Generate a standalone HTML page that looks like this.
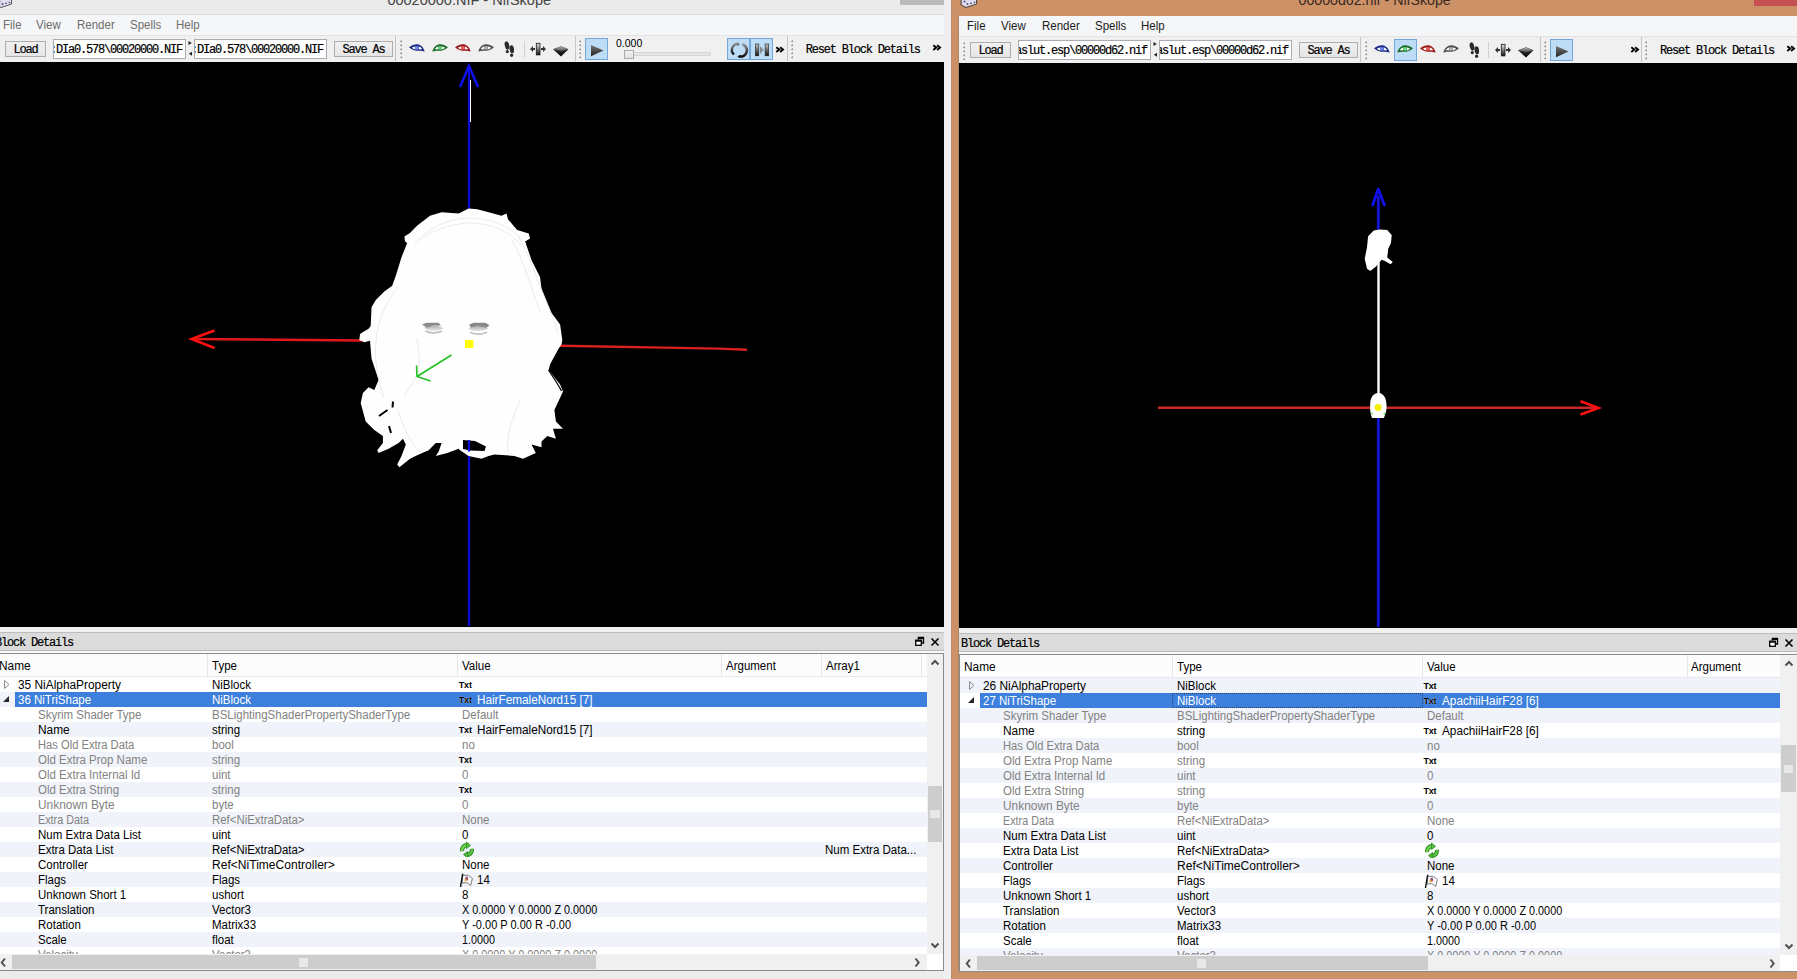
<!DOCTYPE html><html><head><meta charset="utf-8"><style>html,body{margin:0;padding:0;}body{width:1797px;height:979px;overflow:hidden;position:relative;background:#f0f0f0;}.a{position:absolute;}.t{white-space:nowrap;}svg{overflow:visible;}</style></head><body>
<div class="a" style="left:0px;top:0px;width:951px;height:15px;background:#ebebeb;"></div>
<div class="a" style="left:0px;top:14px;width:944px;height:1px;background:#dadada;"></div>
<div class="a t" style="left:387.4px;top:-7.28px;font-size:14.5px;line-height:1;font-family:'Liberation Sans', sans-serif;color:#444;font-weight:normal;">00020000.NIF - NifSkope</div>
<div class="a" style="left:900px;top:0px;width:45px;height:4.5px;background:#bbbbbb;"></div>
<svg class="a" style="left:-5px;top:-6px;" width="18" height="15" viewBox="0 0 18 15"><path d="M1 0 L16.5 0 L16.6 10 L6 13.5 L1.2 11Z" fill="#dedcf0" stroke="#555" stroke-width="1"/><ellipse cx="4.5" cy="7.5" rx="1" ry="0.9" fill="#505060"/><ellipse cx="7.5" cy="10" rx="1" ry="1" fill="#505060"/><ellipse cx="11" cy="9.3" rx="1" ry="0.8" fill="#505060"/><ellipse cx="14.5" cy="8.5" rx="0.9" ry="0.8" fill="#505060"/></svg>
<div class="a" style="left:0px;top:15px;width:944px;height:21px;background:#f5f6f7;"></div>
<div class="a" style="left:0px;top:35px;width:944px;height:1px;background:#e3e3e3;"></div>
<div class="a t" style="left:2.7px;top:18.84px;font-size:12px;line-height:1;font-family:'Liberation Sans', sans-serif;color:#6d6d6d;font-weight:normal;transform:scaleX(0.9583);transform-origin:0 0;">File</div>
<div class="a t" style="left:36px;top:18.84px;font-size:12px;line-height:1;font-family:'Liberation Sans', sans-serif;color:#6d6d6d;font-weight:normal;transform:scaleX(0.9583);transform-origin:0 0;">View</div>
<div class="a t" style="left:77px;top:18.84px;font-size:12px;line-height:1;font-family:'Liberation Sans', sans-serif;color:#6d6d6d;font-weight:normal;transform:scaleX(0.9583);transform-origin:0 0;">Render</div>
<div class="a t" style="left:130px;top:18.84px;font-size:12px;line-height:1;font-family:'Liberation Sans', sans-serif;color:#6d6d6d;font-weight:normal;transform:scaleX(0.9583);transform-origin:0 0;">Spells</div>
<div class="a t" style="left:176px;top:18.84px;font-size:12px;line-height:1;font-family:'Liberation Sans', sans-serif;color:#6d6d6d;font-weight:normal;transform:scaleX(0.9583);transform-origin:0 0;">Help</div>
<div class="a" style="left:0px;top:36px;width:944px;height:26px;background:#f0f0f0;"></div>
<div class="a" style="left:5px;top:41px;width:41px;height:16px;background:linear-gradient(#f0f0f0,#e5e5e5);border:1px solid #adadad;box-sizing:border-box;"></div>
<div class="a t" style="left:13.5px;top:43.81px;font-size:12px;line-height:1;font-family:'Liberation Mono', monospace;color:#000;font-weight:normal;letter-spacing:-1.2px;white-space:pre;-webkit-text-stroke:0.2px #000;">Load</div>
<div class="a" style="left:53px;top:39px;width:133px;height:20px;background:#fff;border:1px solid #abadb3;box-sizing:border-box;overflow:hidden;"><div class="a t" style="left:-4px;top:4.11px;font-size:12px;line-height:1;font-family:'Liberation Mono', monospace;letter-spacing:-1.2px;white-space:pre;color:#000;-webkit-text-stroke:0.2px #000">:DIa0.578\00020000.NIF</div></div>
<svg class="a" style="left:188px;top:41px;" width="5" height="15" viewBox="0 0 5 15"><path d="M0.5 0 L3.8 2 L0.5 4Z" fill="#222"/><path d="M4 10.8 L0.8 12.8 L4 14.8Z" fill="#222"/></svg>
<div class="a" style="left:194px;top:39px;width:133px;height:20px;background:#fff;border:1px solid #abadb3;box-sizing:border-box;overflow:hidden;"><div class="a t" style="left:-4px;top:4.11px;font-size:12px;line-height:1;font-family:'Liberation Mono', monospace;letter-spacing:-1.2px;white-space:pre;color:#000;-webkit-text-stroke:0.2px #000">:DIa0.578\00020000.NIF</div></div>
<div class="a" style="left:334px;top:41px;width:59px;height:16px;background:linear-gradient(#f0f0f0,#e5e5e5);border:1px solid #adadad;box-sizing:border-box;"></div>
<div class="a t" style="left:342.5px;top:43.81px;font-size:12px;line-height:1;font-family:'Liberation Mono', monospace;color:#000;font-weight:normal;letter-spacing:-1.2px;white-space:pre;-webkit-text-stroke:0.2px #000;">Save&nbsp;As</div>
<div class="a" style="left:395px;top:36px;width:1px;height:25px;background:#c5c5c5;"></div>
<svg class="a" style="left:400px;top:40px;" width="3" height="20" viewBox="0 0 3 20"><rect x="1" y="0" width="1" height="1" fill="#b0b0b0"/><rect x="0" y="1" width="2" height="1" fill="#9a9a9a"/><rect x="1" y="2" width="1.5" height="1" fill="#e0e0e0"/><rect x="1" y="4" width="1" height="1" fill="#b0b0b0"/><rect x="0" y="5" width="2" height="1" fill="#9a9a9a"/><rect x="1" y="6" width="1.5" height="1" fill="#e0e0e0"/><rect x="1" y="8" width="1" height="1" fill="#b0b0b0"/><rect x="0" y="9" width="2" height="1" fill="#9a9a9a"/><rect x="1" y="10" width="1.5" height="1" fill="#e0e0e0"/><rect x="1" y="12" width="1" height="1" fill="#b0b0b0"/><rect x="0" y="13" width="2" height="1" fill="#9a9a9a"/><rect x="1" y="14" width="1.5" height="1" fill="#e0e0e0"/><rect x="1" y="16" width="1" height="1" fill="#b0b0b0"/><rect x="0" y="17" width="2" height="1" fill="#9a9a9a"/><rect x="1" y="18" width="1.5" height="1" fill="#e0e0e0"/></svg>
<svg class="a" style="left:409px;top:44.3px;" width="16" height="9" viewBox="0 0 16 9"><path d="M0 3.3 C3 0.8 6 0 8.5 0.2 C12 0.5 14.5 3.5 15.8 7.6 C13 6.6 11 6.6 8 6.7 C5 6.7 2.5 5.4 0 3.3Z" fill="#1c2a88"/><path d="M2.8 3.7 C4.5 2.9 5.6 2.6 6.4 2.5 L6.3 5.4 C4.8 5.2 3.8 4.6 2.8 3.7Z" fill="#fff"/><path d="M9.8 2.6 C11.2 2.9 12.5 4 13.2 5.5 C12 5.3 11 5.3 9.9 5.4Z" fill="#fff"/><path d="M6.7 2.2 L9.5 2.2 L9.7 5.5 L6.5 5.5Z" fill="#6f8ef0"/></svg>
<svg class="a" style="left:432px;top:44.3px;" width="16" height="9" viewBox="0 0 16 9"><g transform="translate(16,0) scale(-1,1)"><path d="M0 3.3 C3 0.8 6 0 8.5 0.2 C12 0.5 14.5 3.5 15.8 7.6 C13 6.6 11 6.6 8 6.7 C5 6.7 2.5 5.4 0 3.3Z" fill="#1a6a2a"/><path d="M2.8 3.7 C4.5 2.9 5.6 2.6 6.4 2.5 L6.3 5.4 C4.8 5.2 3.8 4.6 2.8 3.7Z" fill="#fff"/><path d="M9.8 2.6 C11.2 2.9 12.5 4 13.2 5.5 C12 5.3 11 5.3 9.9 5.4Z" fill="#fff"/><path d="M6.7 2.2 L9.5 2.2 L9.7 5.5 L6.5 5.5Z" fill="#6ee08a"/></g></svg>
<svg class="a" style="left:455px;top:44.3px;" width="16" height="9" viewBox="0 0 16 9"><path d="M0 3.3 C3 0.8 6 0 8.5 0.2 C12 0.5 14.5 3.5 15.8 7.6 C13 6.6 11 6.6 8 6.7 C5 6.7 2.5 5.4 0 3.3Z" fill="#9a1818"/><path d="M2.8 3.7 C4.5 2.9 5.6 2.6 6.4 2.5 L6.3 5.4 C4.8 5.2 3.8 4.6 2.8 3.7Z" fill="#fff"/><path d="M9.8 2.6 C11.2 2.9 12.5 4 13.2 5.5 C12 5.3 11 5.3 9.9 5.4Z" fill="#fff"/><path d="M6.7 2.2 L9.5 2.2 L9.7 5.5 L6.5 5.5Z" fill="#f06060"/></svg>
<svg class="a" style="left:478px;top:44.3px;" width="16" height="9" viewBox="0 0 16 9"><g transform="translate(16,0) scale(-1,1)"><path d="M0 3.3 C3 0.8 6 0 8.5 0.2 C12 0.5 14.5 3.5 15.8 7.6 C13 6.6 11 6.6 8 6.7 C5 6.7 2.5 5.4 0 3.3Z" fill="#505050"/><path d="M2.8 3.7 C4.5 2.9 5.6 2.6 6.4 2.5 L6.3 5.4 C4.8 5.2 3.8 4.6 2.8 3.7Z" fill="#fff"/><path d="M9.8 2.6 C11.2 2.9 12.5 4 13.2 5.5 C12 5.3 11 5.3 9.9 5.4Z" fill="#fff"/><path d="M6.7 2.2 L9.5 2.2 L9.7 5.5 L6.5 5.5Z" fill="#b8b8b8"/></g></svg>
<svg class="a" style="left:503.7px;top:41px;" width="11" height="16" viewBox="0 0 11 16"><ellipse cx="3" cy="4.5" rx="2.2" ry="4.2" fill="#2a2a2a" transform="rotate(-14 3 4.5)"/><ellipse cx="3.3" cy="10.6" rx="1.6" ry="1.7" fill="#2a2a2a"/><ellipse cx="7.8" cy="8.2" rx="2.2" ry="4" fill="#2a2a2a" transform="rotate(-8 7.8 8.2)"/><ellipse cx="7.6" cy="14.2" rx="1.6" ry="1.7" fill="#2a2a2a"/></svg>
<div class="a" style="left:524px;top:41px;width:1px;height:16px;background:#d0d0d0;"></div>
<svg class="a" style="left:530px;top:43px;" width="16" height="12" viewBox="0 0 16 12"><defs><linearGradient id="mg" x1="0" y1="0" x2="0" y2="1"><stop offset="0" stop-color="#e8e8e8"/><stop offset="1" stop-color="#101010"/></linearGradient></defs><rect x="6.3" y="0.3" width="3.7" height="11.6" fill="url(#mg)" stroke="#1a1a1a" stroke-width="0.8"/><path d="M0 6 L3 3 L3 5 L5 5 L5 7 L3 7 L3 9Z" fill="#333"/><path d="M16 6 L13 3 L13 5 L11 5 L11 7 L13 7 L13 9Z" fill="#333"/></svg>
<svg class="a" style="left:553.4px;top:45.6px;" width="16" height="11" viewBox="0 0 16 11"><defs><linearGradient id="tg" x1="0" y1="0" x2="0" y2="1"><stop offset="0" stop-color="#b0b0b0"/><stop offset="1" stop-color="#4a4a4a"/></linearGradient><linearGradient id="tg2" x1="0" y1="0" x2="0" y2="1"><stop offset="0" stop-color="#3a3a3a"/><stop offset="1" stop-color="#050505"/></linearGradient></defs><path d="M0 3.2 L8 0.3 L15.5 3.2 L8 10.6Z" fill="url(#tg2)"/><path d="M0.5 3.2 L8 0.6 L15 3.2 L8 5.2Z" fill="url(#tg)"/></svg>
<div class="a" style="left:574.5px;top:36px;width:1px;height:25px;background:#c5c5c5;"></div>
<svg class="a" style="left:579px;top:40px;" width="3" height="20" viewBox="0 0 3 20"><rect x="1" y="0" width="1" height="1" fill="#b0b0b0"/><rect x="0" y="1" width="2" height="1" fill="#9a9a9a"/><rect x="1" y="2" width="1.5" height="1" fill="#e0e0e0"/><rect x="1" y="4" width="1" height="1" fill="#b0b0b0"/><rect x="0" y="5" width="2" height="1" fill="#9a9a9a"/><rect x="1" y="6" width="1.5" height="1" fill="#e0e0e0"/><rect x="1" y="8" width="1" height="1" fill="#b0b0b0"/><rect x="0" y="9" width="2" height="1" fill="#9a9a9a"/><rect x="1" y="10" width="1.5" height="1" fill="#e0e0e0"/><rect x="1" y="12" width="1" height="1" fill="#b0b0b0"/><rect x="0" y="13" width="2" height="1" fill="#9a9a9a"/><rect x="1" y="14" width="1.5" height="1" fill="#e0e0e0"/><rect x="1" y="16" width="1" height="1" fill="#b0b0b0"/><rect x="0" y="17" width="2" height="1" fill="#9a9a9a"/><rect x="1" y="18" width="1.5" height="1" fill="#e0e0e0"/></svg>
<div class="a" style="left:585px;top:38px;width:23px;height:22px;background:#bddcf6;border:1px solid #74a8dc;box-sizing:border-box;"></div>
<svg class="a" style="left:590.6px;top:44.6px;" width="13" height="12" viewBox="0 0 13 12"><defs><linearGradient id="pg" x1="0" y1="0" x2="0" y2="1"><stop offset="0" stop-color="#777"/><stop offset="1" stop-color="#222"/></linearGradient></defs><path d="M0 0 L12.5 5.6 L0 11.3Z" fill="url(#pg)"/></svg>
<div class="a t" style="left:616px;top:38.21px;font-size:10.5px;line-height:1;font-family:'Liberation Sans', sans-serif;color:#000;font-weight:normal;">0.000</div>
<div class="a" style="left:624px;top:52px;width:87px;height:4px;background:#e6e6e6;border:1px solid #d6d6d6;box-sizing:border-box;"></div>
<div class="a" style="left:624px;top:50px;width:10px;height:9px;background:linear-gradient(#f4f4f4,#e0e0e0);border:1px solid #acacac;box-sizing:border-box;"></div>
<div class="a" style="left:727px;top:38px;width:46px;height:22px;background:#bddcf6;border:1px solid #74a8dc;box-sizing:border-box;"></div>
<div class="a" style="left:749px;top:38px;width:1.5px;height:22px;background:#74a8dc;"></div>
<svg class="a" style="left:731px;top:42px;" width="16" height="16" viewBox="0 0 16 16"><defs><linearGradient id="lg" x1="0" y1="0" x2="0" y2="1"><stop offset="0" stop-color="#8a8a8a"/><stop offset="1" stop-color="#101010"/></linearGradient></defs><path d="M7.5 2 A6 6 0 0 0 3 12.5" stroke="url(#lg)" stroke-width="2.3" fill="none"/><path d="M11.5 2.5 A6 6 0 0 1 8 14.3" stroke="url(#lg)" stroke-width="2.6" fill="none"/><path d="M6 0.5 L9 2.2 L6.5 4.5Z" fill="#777"/><path d="M9.5 12.8 L6.3 14.5 L9 16Z" fill="#111"/></svg>
<svg class="a" style="left:755px;top:44px;" width="14" height="12" viewBox="0 0 14 12"><defs><linearGradient id="bg2" x1="0" y1="0" x2="0" y2="1"><stop offset="0" stop-color="#c8c8c8"/><stop offset="1" stop-color="#111"/></linearGradient></defs><rect x="0.3" y="0" width="3.5" height="11.8" fill="url(#bg2)" stroke="#222" stroke-width="0.6"/><rect x="10.1" y="0" width="3.6" height="11.8" fill="url(#bg2)" stroke="#222" stroke-width="0.6"/><path d="M5 2 L8.7 6 L5 10Z" fill="#8a8a8a"/></svg>
<svg class="a" style="left:776px;top:47px;" width="8" height="6" viewBox="0 0 8 6"><path d="M0.3 0.3 L3.2 2.6 L0.3 4.9 M4.1 0.3 L7 2.6 L4.1 4.9" stroke="#000" stroke-width="1.9" fill="none"/></svg>
<div class="a" style="left:786.5px;top:36px;width:1px;height:25px;background:#c5c5c5;"></div>
<svg class="a" style="left:791px;top:40px;" width="3" height="20" viewBox="0 0 3 20"><rect x="1" y="0" width="1" height="1" fill="#b0b0b0"/><rect x="0" y="1" width="2" height="1" fill="#9a9a9a"/><rect x="1" y="2" width="1.5" height="1" fill="#e0e0e0"/><rect x="1" y="4" width="1" height="1" fill="#b0b0b0"/><rect x="0" y="5" width="2" height="1" fill="#9a9a9a"/><rect x="1" y="6" width="1.5" height="1" fill="#e0e0e0"/><rect x="1" y="8" width="1" height="1" fill="#b0b0b0"/><rect x="0" y="9" width="2" height="1" fill="#9a9a9a"/><rect x="1" y="10" width="1.5" height="1" fill="#e0e0e0"/><rect x="1" y="12" width="1" height="1" fill="#b0b0b0"/><rect x="0" y="13" width="2" height="1" fill="#9a9a9a"/><rect x="1" y="14" width="1.5" height="1" fill="#e0e0e0"/><rect x="1" y="16" width="1" height="1" fill="#b0b0b0"/><rect x="0" y="17" width="2" height="1" fill="#9a9a9a"/><rect x="1" y="18" width="1.5" height="1" fill="#e0e0e0"/></svg>
<div class="a t" style="left:805.7px;top:43.61px;font-size:12px;line-height:1;font-family:'Liberation Mono', monospace;color:#000;font-weight:normal;letter-spacing:-1.2px;white-space:pre;-webkit-text-stroke:0.2px #000;">Reset&nbsp;Block&nbsp;Details</div>
<svg class="a" style="left:933px;top:45px;" width="8" height="6" viewBox="0 0 8 6"><path d="M0.3 0.3 L3.2 2.6 L0.3 4.9 M4.1 0.3 L7 2.6 L4.1 4.9" stroke="#000" stroke-width="1.9" fill="none"/></svg>
<div class="a" style="left:0px;top:62px;width:944px;height:565px;background:#000;"></div>
<div class="a" style="left:0px;top:627px;width:944px;height:5px;background:#f0f0f0;"></div>
<div class="a" style="left:0px;top:632px;width:944px;height:1px;background:#bdbdbd;"></div>
<div class="a" style="left:0px;top:633px;width:944px;height:17px;background:#dbdbdb;"></div>
<div class="a" style="left:0px;top:650px;width:944px;height:1px;background:#b9b9b9;"></div>
<div class="a" style="left:0px;top:651px;width:944px;height:2px;background:#f9f9f9;"></div>
<div class="a t" style="left:-5px;top:636.81px;font-size:12px;line-height:1;font-family:'Liberation Mono', monospace;color:#000;font-weight:normal;letter-spacing:-1.2px;white-space:pre;-webkit-text-stroke:0.2px #000;">Block&nbsp;Details</div>
<svg class="a" style="left:915px;top:637px;" width="9" height="9" viewBox="0 0 9 9"><path d="M3 0.5 H8.5 V6 H7 M3.5 2.5 V0.5" fill="none" stroke="#000" stroke-width="1.3"/><rect x="0.7" y="3.2" width="5.6" height="5.1" fill="#fff" stroke="#000" stroke-width="1.3"/><rect x="0.7" y="3.2" width="5.6" height="1.5" fill="#000"/><rect x="2.7" y="0.4" width="6" height="1.6" fill="#000"/></svg>
<svg class="a" style="left:931px;top:638px;" width="8" height="8" viewBox="0 0 8 8"><path d="M0.5 0.5 L7.5 7.5 M7.5 0.5 L0.5 7.5" stroke="#000" stroke-width="1.6"/></svg>
<div class="a" style="left:-6px;top:653px;width:950px;height:318px;background:#fff;border:1px solid #8a8a8a;box-sizing:border-box;"></div>
<div class="a" style="left:-5px;top:654px;width:932px;height:22px;background:#fcfcfc;"></div>
<div class="a" style="left:-5px;top:676px;width:932px;height:1px;background:#e8e8e8;"></div>
<div class="a" style="left:207px;top:654px;width:1px;height:22px;background:#e5e5e5;"></div>
<div class="a" style="left:457px;top:654px;width:1px;height:22px;background:#e5e5e5;"></div>
<div class="a" style="left:721px;top:654px;width:1px;height:22px;background:#e5e5e5;"></div>
<div class="a" style="left:821px;top:654px;width:1px;height:22px;background:#e5e5e5;"></div>
<div class="a" style="left:921px;top:654px;width:1px;height:22px;background:#e5e5e5;"></div>
<div class="a t" style="left:-1.5px;top:659.84px;font-size:12px;line-height:1;font-family:'Liberation Sans', sans-serif;color:#000;font-weight:normal;transform:scaleX(0.9903);transform-origin:0 0;">Name</div>
<div class="a t" style="left:211.6px;top:659.84px;font-size:12px;line-height:1;font-family:'Liberation Sans', sans-serif;color:#000;font-weight:normal;transform:scaleX(0.9583);transform-origin:0 0;">Type</div>
<div class="a t" style="left:461.5px;top:659.84px;font-size:12px;line-height:1;font-family:'Liberation Sans', sans-serif;color:#000;font-weight:normal;transform:scaleX(0.9583);transform-origin:0 0;">Value</div>
<div class="a t" style="left:725.7px;top:659.84px;font-size:12px;line-height:1;font-family:'Liberation Sans', sans-serif;color:#000;font-weight:normal;transform:scaleX(0.9583);transform-origin:0 0;">Argument</div>
<div class="a t" style="left:825.6px;top:659.84px;font-size:12px;line-height:1;font-family:'Liberation Sans', sans-serif;color:#000;font-weight:normal;transform:scaleX(0.9583);transform-origin:0 0;">Array1</div>
<div class="a" style="left:-5px;top:677px;width:932px;height:277px;overflow:hidden">
<div class="a" style="left:0px;top:0px;width:932px;height:15px;background:#fff;"></div>
<div class="a t" style="left:23px;top:1.64px;font-size:12px;line-height:1;font-family:'Liberation Sans', sans-serif;color:#000;font-weight:normal;transform:scaleX(0.9898);transform-origin:0 0;">35 NiAlphaProperty</div>
<svg class="a" style="left:9px;top:3px;" width="6" height="10" viewBox="0 0 6 10"><path d="M0.5 0.5 L5 4.5 L0.5 8.5Z" fill="none" stroke="#8a8a8a" stroke-width="1"/></svg>
<div class="a t" style="left:216.7px;top:1.64px;font-size:12px;line-height:1;font-family:'Liberation Sans', sans-serif;color:#000;font-weight:normal;transform:scaleX(0.9583);transform-origin:0 0;">NiBlock</div>
<div class="a t" style="left:463.8px;top:3.68px;font-size:9px;line-height:1;font-family:'Liberation Sans', sans-serif;color:#000;font-weight:bold;letter-spacing:-0.2px;">Txt</div>
<div class="a" style="left:0px;top:15px;width:932px;height:15px;background:#f0f3f9;"></div>
<div class="a" style="left:20px;top:15px;width:912px;height:15px;background:#3c7fdc;"></div>
<div class="a t" style="left:23px;top:16.64px;font-size:12px;line-height:1;font-family:'Liberation Sans', sans-serif;color:#fff;font-weight:normal;transform:scaleX(0.9583);transform-origin:0 0;">36 NiTriShape</div>
<svg class="a" style="left:8px;top:19px;" width="7" height="7" viewBox="0 0 7 7"><path d="M6 0 L6 6 L0 6Z" fill="#262626"/></svg>
<div class="a t" style="left:216.7px;top:16.64px;font-size:12px;line-height:1;font-family:'Liberation Sans', sans-serif;color:#fff;font-weight:normal;transform:scaleX(0.9583);transform-origin:0 0;">NiBlock</div>
<div class="a t" style="left:463.8px;top:18.68px;font-size:9px;line-height:1;font-family:'Liberation Sans', sans-serif;color:#000;font-weight:bold;text-shadow:0 0 1px #fff;letter-spacing:-0.2px;">Txt</div>
<div class="a t" style="left:482.3px;top:16.64px;font-size:12px;line-height:1;font-family:'Liberation Sans', sans-serif;color:#fff;font-weight:normal;transform:scaleX(0.9784);transform-origin:0 0;">HairFemaleNord15 [7]</div>
<div class="a" style="left:0px;top:30px;width:932px;height:15px;background:#fff;"></div>
<div class="a t" style="left:43px;top:31.64px;font-size:12px;line-height:1;font-family:'Liberation Sans', sans-serif;color:#828282;font-weight:normal;transform:scaleX(0.9583);transform-origin:0 0;">Skyrim Shader Type</div>
<div class="a t" style="left:216.7px;top:31.64px;font-size:12px;line-height:1;font-family:'Liberation Sans', sans-serif;color:#828282;font-weight:normal;transform:scaleX(0.9583);transform-origin:0 0;">BSLightingShaderPropertyShaderType</div>
<div class="a t" style="left:466.8px;top:31.64px;font-size:12px;line-height:1;font-family:'Liberation Sans', sans-serif;color:#828282;font-weight:normal;transform:scaleX(0.9583);transform-origin:0 0;">Default</div>
<div class="a" style="left:0px;top:45px;width:932px;height:15px;background:#f0f3f9;"></div>
<div class="a t" style="left:43px;top:46.64px;font-size:12px;line-height:1;font-family:'Liberation Sans', sans-serif;color:#000;font-weight:normal;transform:scaleX(0.9903);transform-origin:0 0;">Name</div>
<div class="a t" style="left:216.7px;top:46.64px;font-size:12px;line-height:1;font-family:'Liberation Sans', sans-serif;color:#000;font-weight:normal;transform:scaleX(0.9583);transform-origin:0 0;">string</div>
<div class="a t" style="left:463.8px;top:48.68px;font-size:9px;line-height:1;font-family:'Liberation Sans', sans-serif;color:#000;font-weight:bold;letter-spacing:-0.2px;">Txt</div>
<div class="a t" style="left:482.3px;top:46.64px;font-size:12px;line-height:1;font-family:'Liberation Sans', sans-serif;color:#000;font-weight:normal;transform:scaleX(0.9784);transform-origin:0 0;">HairFemaleNord15 [7]</div>
<div class="a" style="left:0px;top:60px;width:932px;height:15px;background:#fff;"></div>
<div class="a t" style="left:43px;top:61.64px;font-size:12px;line-height:1;font-family:'Liberation Sans', sans-serif;color:#828282;font-weight:normal;transform:scaleX(0.9306);transform-origin:0 0;">Has Old Extra Data</div>
<div class="a t" style="left:216.7px;top:61.64px;font-size:12px;line-height:1;font-family:'Liberation Sans', sans-serif;color:#828282;font-weight:normal;transform:scaleX(0.9583);transform-origin:0 0;">bool</div>
<div class="a t" style="left:466.8px;top:61.64px;font-size:12px;line-height:1;font-family:'Liberation Sans', sans-serif;color:#828282;font-weight:normal;transform:scaleX(0.9583);transform-origin:0 0;">no</div>
<div class="a" style="left:0px;top:75px;width:932px;height:15px;background:#f0f3f9;"></div>
<div class="a t" style="left:43px;top:76.64px;font-size:12px;line-height:1;font-family:'Liberation Sans', sans-serif;color:#828282;font-weight:normal;transform:scaleX(0.9583);transform-origin:0 0;">Old Extra Prop Name</div>
<div class="a t" style="left:216.7px;top:76.64px;font-size:12px;line-height:1;font-family:'Liberation Sans', sans-serif;color:#828282;font-weight:normal;transform:scaleX(0.9583);transform-origin:0 0;">string</div>
<div class="a t" style="left:463.8px;top:78.68px;font-size:9px;line-height:1;font-family:'Liberation Sans', sans-serif;color:#000;font-weight:bold;letter-spacing:-0.2px;">Txt</div>
<div class="a" style="left:0px;top:90px;width:932px;height:15px;background:#fff;"></div>
<div class="a t" style="left:43px;top:91.64px;font-size:12px;line-height:1;font-family:'Liberation Sans', sans-serif;color:#828282;font-weight:normal;transform:scaleX(0.9583);transform-origin:0 0;">Old Extra Internal Id</div>
<div class="a t" style="left:216.7px;top:91.64px;font-size:12px;line-height:1;font-family:'Liberation Sans', sans-serif;color:#828282;font-weight:normal;transform:scaleX(0.9583);transform-origin:0 0;">uint</div>
<div class="a t" style="left:466.8px;top:91.64px;font-size:12px;line-height:1;font-family:'Liberation Sans', sans-serif;color:#828282;font-weight:normal;transform:scaleX(0.9583);transform-origin:0 0;">0</div>
<div class="a" style="left:0px;top:105px;width:932px;height:15px;background:#f0f3f9;"></div>
<div class="a t" style="left:43px;top:106.64px;font-size:12px;line-height:1;font-family:'Liberation Sans', sans-serif;color:#828282;font-weight:normal;transform:scaleX(0.9583);transform-origin:0 0;">Old Extra String</div>
<div class="a t" style="left:216.7px;top:106.64px;font-size:12px;line-height:1;font-family:'Liberation Sans', sans-serif;color:#828282;font-weight:normal;transform:scaleX(0.9583);transform-origin:0 0;">string</div>
<div class="a t" style="left:463.8px;top:108.68px;font-size:9px;line-height:1;font-family:'Liberation Sans', sans-serif;color:#000;font-weight:bold;letter-spacing:-0.2px;">Txt</div>
<div class="a" style="left:0px;top:120px;width:932px;height:15px;background:#fff;"></div>
<div class="a t" style="left:43px;top:121.64px;font-size:12px;line-height:1;font-family:'Liberation Sans', sans-serif;color:#828282;font-weight:normal;transform:scaleX(0.9913);transform-origin:0 0;">Unknown Byte</div>
<div class="a t" style="left:216.7px;top:121.64px;font-size:12px;line-height:1;font-family:'Liberation Sans', sans-serif;color:#828282;font-weight:normal;transform:scaleX(0.9583);transform-origin:0 0;">byte</div>
<div class="a t" style="left:466.8px;top:121.64px;font-size:12px;line-height:1;font-family:'Liberation Sans', sans-serif;color:#828282;font-weight:normal;transform:scaleX(0.9583);transform-origin:0 0;">0</div>
<div class="a" style="left:0px;top:135px;width:932px;height:15px;background:#f0f3f9;"></div>
<div class="a t" style="left:43px;top:136.64px;font-size:12px;line-height:1;font-family:'Liberation Sans', sans-serif;color:#828282;font-weight:normal;transform:scaleX(0.8996);transform-origin:0 0;">Extra Data</div>
<div class="a t" style="left:216.7px;top:136.64px;font-size:12px;line-height:1;font-family:'Liberation Sans', sans-serif;color:#828282;font-weight:normal;transform:scaleX(0.9499);transform-origin:0 0;">Ref&lt;NiExtraData&gt;</div>
<div class="a t" style="left:466.8px;top:136.64px;font-size:12px;line-height:1;font-family:'Liberation Sans', sans-serif;color:#828282;font-weight:normal;transform:scaleX(0.9583);transform-origin:0 0;">None</div>
<div class="a" style="left:0px;top:150px;width:932px;height:15px;background:#fff;"></div>
<div class="a t" style="left:43px;top:151.64px;font-size:12px;line-height:1;font-family:'Liberation Sans', sans-serif;color:#000;font-weight:normal;transform:scaleX(0.9583);transform-origin:0 0;">Num Extra Data List</div>
<div class="a t" style="left:216.7px;top:151.64px;font-size:12px;line-height:1;font-family:'Liberation Sans', sans-serif;color:#000;font-weight:normal;transform:scaleX(0.9583);transform-origin:0 0;">uint</div>
<div class="a t" style="left:466.8px;top:151.64px;font-size:12px;line-height:1;font-family:'Liberation Sans', sans-serif;color:#000;font-weight:normal;transform:scaleX(0.9583);transform-origin:0 0;">0</div>
<div class="a" style="left:0px;top:165px;width:932px;height:15px;background:#f0f3f9;"></div>
<div class="a t" style="left:43px;top:166.64px;font-size:12px;line-height:1;font-family:'Liberation Sans', sans-serif;color:#000;font-weight:normal;transform:scaleX(0.9583);transform-origin:0 0;">Extra Data List</div>
<div class="a t" style="left:216.7px;top:166.64px;font-size:12px;line-height:1;font-family:'Liberation Sans', sans-serif;color:#000;font-weight:normal;transform:scaleX(0.9499);transform-origin:0 0;">Ref&lt;NiExtraData&gt;</div>
<svg class="a" style="left:464.8px;top:166px;" width="14" height="14" viewBox="0 0 14 14"><path d="M7.5 2.2 C4 2 1.8 4.5 2 8.2" stroke="#2c8a22" stroke-width="4.2" fill="none"/><path d="M7.5 2.2 C4 2 1.8 4.5 2 8.2" stroke="#74d052" stroke-width="2.4" fill="none"/><path d="M6.5 -1 L10.5 2.4 L6.5 5.6Z" fill="#5cbf3e" stroke="#2c8a22" stroke-width="0.8"/><path d="M6.5 11.8 C10 12 12.2 9.5 12 5.8" stroke="#2c8a22" stroke-width="4.2" fill="none"/><path d="M6.5 11.8 C10 12 12.2 9.5 12 5.8" stroke="#5cc040" stroke-width="2.4" fill="none"/><path d="M7.5 15 L3.5 11.6 L7.5 8.4Z" fill="#4fb534" stroke="#2c8a22" stroke-width="0.8"/></svg>
<div class="a t" style="left:830px;top:166.64px;font-size:12px;line-height:1;font-family:'Liberation Sans', sans-serif;color:#000;font-weight:normal;transform:scaleX(0.9583);transform-origin:0 0;">Num Extra Data...</div>
<div class="a" style="left:0px;top:180px;width:932px;height:15px;background:#fff;"></div>
<div class="a t" style="left:43px;top:181.64px;font-size:12px;line-height:1;font-family:'Liberation Sans', sans-serif;color:#000;font-weight:normal;transform:scaleX(0.9583);transform-origin:0 0;">Controller</div>
<div class="a t" style="left:216.7px;top:181.64px;font-size:12px;line-height:1;font-family:'Liberation Sans', sans-serif;color:#000;font-weight:normal;transform:scaleX(1.0052);transform-origin:0 0;">Ref&lt;NiTimeController&gt;</div>
<div class="a t" style="left:466.8px;top:181.64px;font-size:12px;line-height:1;font-family:'Liberation Sans', sans-serif;color:#000;font-weight:normal;transform:scaleX(0.9583);transform-origin:0 0;">None</div>
<div class="a" style="left:0px;top:195px;width:932px;height:15px;background:#f0f3f9;"></div>
<div class="a t" style="left:43px;top:196.64px;font-size:12px;line-height:1;font-family:'Liberation Sans', sans-serif;color:#000;font-weight:normal;transform:scaleX(0.9583);transform-origin:0 0;">Flags</div>
<div class="a t" style="left:216.7px;top:196.64px;font-size:12px;line-height:1;font-family:'Liberation Sans', sans-serif;color:#000;font-weight:normal;transform:scaleX(0.9583);transform-origin:0 0;">Flags</div>
<svg class="a" style="left:464.1px;top:195.5px;" width="14" height="15" viewBox="0 0 14 15"><path d="M3.8 2.2 L9.5 2.4 L13.4 5.6 L11.6 12.6 Q9.5 10.2 7.2 9.6 L3.1 10.2Z" fill="#fafafa" stroke="#7a7a7a" stroke-width="1"/><circle cx="7.6" cy="6" r="1.7" fill="#c65a4a"/><circle cx="6.4" cy="7.4" r="1.1" fill="#e2c048"/><circle cx="7.9" cy="4.6" r="1.1" fill="#6a58b0"/><path d="M3.6 1.2 L1.4 14.6" stroke="#111" stroke-width="1.4" stroke-linecap="round"/></svg>
<div class="a t" style="left:482.3px;top:196.64px;font-size:12px;line-height:1;font-family:'Liberation Sans', sans-serif;color:#000;font-weight:normal;transform:scaleX(0.9583);transform-origin:0 0;">14</div>
<div class="a" style="left:0px;top:210px;width:932px;height:15px;background:#fff;"></div>
<div class="a t" style="left:43px;top:211.64px;font-size:12px;line-height:1;font-family:'Liberation Sans', sans-serif;color:#000;font-weight:normal;transform:scaleX(0.9583);transform-origin:0 0;">Unknown Short 1</div>
<div class="a t" style="left:216.7px;top:211.64px;font-size:12px;line-height:1;font-family:'Liberation Sans', sans-serif;color:#000;font-weight:normal;transform:scaleX(0.9583);transform-origin:0 0;">ushort</div>
<div class="a t" style="left:466.8px;top:211.64px;font-size:12px;line-height:1;font-family:'Liberation Sans', sans-serif;color:#000;font-weight:normal;transform:scaleX(0.9583);transform-origin:0 0;">8</div>
<div class="a" style="left:0px;top:225px;width:932px;height:15px;background:#f0f3f9;"></div>
<div class="a t" style="left:43px;top:226.64px;font-size:12px;line-height:1;font-family:'Liberation Sans', sans-serif;color:#000;font-weight:normal;transform:scaleX(0.9583);transform-origin:0 0;">Translation</div>
<div class="a t" style="left:216.7px;top:226.64px;font-size:12px;line-height:1;font-family:'Liberation Sans', sans-serif;color:#000;font-weight:normal;transform:scaleX(0.9583);transform-origin:0 0;">Vector3</div>
<div class="a t" style="left:466.8px;top:226.64px;font-size:12px;line-height:1;font-family:'Liberation Sans', sans-serif;color:#000;font-weight:normal;transform:scaleX(0.9032);transform-origin:0 0;">X 0.0000 Y 0.0000 Z 0.0000</div>
<div class="a" style="left:0px;top:240px;width:932px;height:15px;background:#fff;"></div>
<div class="a t" style="left:43px;top:241.64px;font-size:12px;line-height:1;font-family:'Liberation Sans', sans-serif;color:#000;font-weight:normal;transform:scaleX(0.9583);transform-origin:0 0;">Rotation</div>
<div class="a t" style="left:216.7px;top:241.64px;font-size:12px;line-height:1;font-family:'Liberation Sans', sans-serif;color:#000;font-weight:normal;transform:scaleX(0.9583);transform-origin:0 0;">Matrix33</div>
<div class="a t" style="left:466.8px;top:241.64px;font-size:12px;line-height:1;font-family:'Liberation Sans', sans-serif;color:#000;font-weight:normal;transform:scaleX(0.9162);transform-origin:0 0;">Y -0.00 P 0.00 R -0.00</div>
<div class="a" style="left:0px;top:255px;width:932px;height:15px;background:#f0f3f9;"></div>
<div class="a t" style="left:43px;top:256.64px;font-size:12px;line-height:1;font-family:'Liberation Sans', sans-serif;color:#000;font-weight:normal;transform:scaleX(0.9583);transform-origin:0 0;">Scale</div>
<div class="a t" style="left:216.7px;top:256.64px;font-size:12px;line-height:1;font-family:'Liberation Sans', sans-serif;color:#000;font-weight:normal;transform:scaleX(0.9583);transform-origin:0 0;">float</div>
<div class="a t" style="left:466.8px;top:256.64px;font-size:12px;line-height:1;font-family:'Liberation Sans', sans-serif;color:#000;font-weight:normal;transform:scaleX(0.8991);transform-origin:0 0;">1.0000</div>
<div class="a" style="left:0px;top:270px;width:932px;height:15px;background:#fff;"></div>
<div class="a t" style="left:43px;top:271.64px;font-size:12px;line-height:1;font-family:'Liberation Sans', sans-serif;color:#828282;font-weight:normal;transform:scaleX(0.9583);transform-origin:0 0;">Velocity</div>
<div class="a t" style="left:216.7px;top:271.64px;font-size:12px;line-height:1;font-family:'Liberation Sans', sans-serif;color:#828282;font-weight:normal;transform:scaleX(0.9583);transform-origin:0 0;">Vector3</div>
<div class="a t" style="left:466.8px;top:271.64px;font-size:12px;line-height:1;font-family:'Liberation Sans', sans-serif;color:#828282;font-weight:normal;transform:scaleX(0.9032);transform-origin:0 0;">X 0.0000 Y 0.0000 Z 0.0000</div>
</div>
<div class="a" style="left:927px;top:654px;width:16px;height:300px;background:#f0f0f0;"></div>
<svg class="a" style="left:931px;top:660px;" width="8" height="5" viewBox="0 0 8 5"><path d="M0.5 4.5 L4 1 L7.5 4.5" stroke="#505050" stroke-width="2" fill="none"/></svg>
<svg class="a" style="left:931px;top:943px;" width="8" height="5" viewBox="0 0 8 5"><path d="M0.5 0.5 L4 4 L7.5 0.5" stroke="#505050" stroke-width="2" fill="none"/></svg>
<div class="a" style="left:928px;top:786px;width:14px;height:56px;background:#cdcdcd;"></div>
<div class="a" style="left:930px;top:810px;width:10px;height:8px;background:#e8e8e8;"></div>
<div class="a" style="left:-5px;top:954px;width:932px;height:16px;background:#f0f0f0;"></div>
<div class="a" style="left:12px;top:955px;width:584px;height:14px;background:#cdcdcd;"></div>
<div class="a" style="left:299px;top:958px;width:9px;height:9px;background:#e8e8e8;"></div>
<svg class="a" style="left:1px;top:958px;" width="5" height="9" viewBox="0 0 5 9"><path d="M4 0.5 L0.8 4.5 L4 8.5" stroke="#505050" stroke-width="2" fill="none"/></svg>
<svg class="a" style="left:915px;top:958px;" width="5" height="9" viewBox="0 0 5 9"><path d="M0.5 0.5 L3.7 4.5 L0.5 8.5" stroke="#505050" stroke-width="2" fill="none"/></svg>
<div class="a" style="left:927px;top:954px;width:16px;height:16px;background:#fff;"></div>
<div class="a" style="left:0px;top:971px;width:944px;height:8px;background:#ececec;"></div>
<div class="a" style="left:944px;top:0px;width:7px;height:979px;background:#eeeeee;"></div>
<svg class="a" style="left:0px;top:62px;" width="944" height="565" viewBox="0 0 944 565"><g transform="translate(0,-62)"><path d="M192 339 L362 340.5" stroke="#e01818" stroke-width="2.5"/><path d="M560 345.8 L719 348.6 L747 349.8" stroke="#d82020" stroke-width="2.4"/><path d="M214.5 330.5 L191.5 339 L214.5 348" stroke="#ff1010" stroke-width="2.5" fill="none"/><path d="M469 66 L469 626" stroke="#0c0cd8" stroke-width="2.2"/><path d="M460 87 L469 66 L478 87" stroke="#1010f0" stroke-width="2.6" fill="none"/><path d="M470.5 80 L470.5 122" stroke="#fff" stroke-width="1"/><path d="M468.6 208.6 L477.2 209.3 L488.6 212.2 L501.5 215.7 L506.5 213.5 L508 219.3 L517.2 230 L528.7 233.6 L530.1 238.6 L525.1 241.5 L531.5 260 L540.1 277.3 L541.5 288.7 L551.6 313 L560.1 324.5 L562.3 340 L561.6 344.3 L558.7 348.6 L550.1 364.3 L548.7 370 L560.1 384.4 L563 391.5 L554.4 410.1 L555.9 421.6 L563 428.7 L553 428.7 L555.9 438.7 L547.3 435.9 L541.5 441.6 L541.5 447.3 L531.5 444.4 L535.8 453 L523 458.8 L514.4 455.9 L494.3 454.5 L488.6 455.9 L481.5 458.8 L468.6 455.9 L460 450.2 L458.7 448.7 L447.3 453 L435.8 455.9 L438.7 451.6 L441.6 443 L435.8 443 L428.7 450.2 L418.7 454.5 L410 458.8 L399.4 467.3 L397.2 464.5 L401.5 455.9 L405.8 444.4 L403 438.7 L398.6 443 L388.6 448.7 L378.6 453 L377.2 450.2 L382.9 443 L382.9 435.9 L374.3 430.1 L365.7 421.6 L360.7 403 L362.9 393 L368.6 387.2 L374.3 390 L378.6 380 L371.5 358.6 L370 340.7 L364.3 342.2 L359.3 340 L360 334.3 L361.4 333 L368.6 328.8 L370.7 325.9 L371.5 307.3 L375.8 300 L384.3 291.6 L392.2 285.8 L395.8 275.8 L401.5 257.2 L407.2 243 L405 241.5 L404.4 236.5 L410 233 L417 225.8 L430 215.7 L441.6 212.2 L458.7 213.6Z" fill="#fefefe"/><path d="M463 440 L475 441 L486 446.5 L484.5 451 L470 450.5 L463 449Z" fill="#000"/><path d="M469 440 L469 451.5" stroke="#1212e0" stroke-width="2.2"/><path d="M548.5 370 C553 377 558 384 561.5 391" stroke="#000" stroke-width="1.3" fill="none"/><path d="M379 416 L387.5 410 M393 401.5 L392.5 407.5 M389 426 L391 433" stroke="#000" stroke-width="2" fill="none"/><g fill="none" stroke="#e2e2e2" stroke-width="0.7"><path d="M414 244 C430 226 452 218 470 218 C492 219 512 226 526 244"/><path d="M420 240 C436 228 456 223 472 223 C494 224 510 232 522 246"/><path d="M518 236 C530 256 538 282 548 306 C552 316 556 324 558 334"/><path d="M512 240 C524 262 532 290 540 312"/><path d="M398 286 C388 300 378 318 376 340 C374 360 378 380 384 398"/><path d="M417 338 C419 350 420 362 418 372 C414 382 408 390 404 396"/><path d="M520 400 C512 420 506 436 508 452"/><path d="M398 410 C404 430 412 444 420 452"/></g><defs><linearGradient id="eg" x1="0" y1="0" x2="0" y2="1"><stop offset="0" stop-color="#a8a8a8"/><stop offset="1" stop-color="#ececec"/></linearGradient></defs><path d="M425.5 331 C430 333.5 437 333.5 442 331" stroke="#bdbdbd" stroke-width="1.6" fill="none"/><path d="M424 327.8 C429 324.5 437 324.5 443.5 328.3 C438 331.8 429 331.8 424 327.8Z" fill="url(#eg)"/><path d="M422 324.6 L426.5 322.8 L438.5 322.8 L441 325.8 L433 325.5 L427 327.5Z" fill="#8a8a8a"/><path d="M470 332.2 C475 334.5 482 334.5 487 332.2" stroke="#c2c2c2" stroke-width="1.6" fill="none"/><path d="M468.5 328.4 C474 325 482 325 488 328.6 C482 332.3 474 332.3 468.5 328.4Z" fill="url(#eg)"/><path d="M469 324.8 L473.5 322.8 L485.5 322.8 L489.5 325.2 L486.5 327.8 L478 325.8 L471 327.5Z" fill="#888"/><rect x="465" y="340" width="8.3" height="8" fill="#ffff00"/><path d="M451.5 355 L417 376.5 M416.5 365.5 L417 376.5 L430.5 381" stroke="#20c020" stroke-width="1.6" fill="none"/></g></svg>
<div class="a" style="left:951px;top:0px;width:846px;height:979px;background:#cd9168;"></div>
<div class="a" style="left:951px;top:0px;width:1px;height:979px;background:#b88d70;"></div>
<div class="a" style="left:958px;top:15px;width:1px;height:957px;background:#a9866e;"></div>
<div class="a t" style="left:1298.5px;top:-7.02px;font-size:14.2px;line-height:1;font-family:'Liberation Sans', sans-serif;color:#3a2a1e;font-weight:normal;">00000d62.nif - NifSkope</div>
<div class="a" style="left:1754px;top:0px;width:43px;height:5.7px;background:#c75050;"></div>
<svg class="a" style="left:960px;top:-6px;" width="18" height="15" viewBox="0 0 18 15"><path d="M1 0 L16.5 0 L16.6 10 L6 13.5 L1.2 11Z" fill="#dedcf0" stroke="#4a3a30" stroke-width="1"/><ellipse cx="4.5" cy="7.5" rx="1" ry="0.9" fill="#505060"/><ellipse cx="7.5" cy="10" rx="1" ry="1" fill="#505060"/><ellipse cx="11" cy="9.3" rx="1" ry="0.8" fill="#505060"/><ellipse cx="14.5" cy="8.5" rx="0.9" ry="0.8" fill="#505060"/><rect x="7" y="4" width="3" height="2" fill="#101030"/></svg>
<div class="a" style="left:959px;top:16px;width:838px;height:21px;background:#f5f6f7;"></div>
<div class="a" style="left:959px;top:36px;width:838px;height:1px;background:#e3e3e3;"></div>
<div class="a t" style="left:967.3px;top:19.84px;font-size:12px;line-height:1;font-family:'Liberation Sans', sans-serif;color:#1b1b1b;font-weight:normal;transform:scaleX(0.9583);transform-origin:0 0;">File</div>
<div class="a t" style="left:1001px;top:19.84px;font-size:12px;line-height:1;font-family:'Liberation Sans', sans-serif;color:#1b1b1b;font-weight:normal;transform:scaleX(0.9583);transform-origin:0 0;">View</div>
<div class="a t" style="left:1042px;top:19.84px;font-size:12px;line-height:1;font-family:'Liberation Sans', sans-serif;color:#1b1b1b;font-weight:normal;transform:scaleX(0.9583);transform-origin:0 0;">Render</div>
<div class="a t" style="left:1095.3px;top:19.84px;font-size:12px;line-height:1;font-family:'Liberation Sans', sans-serif;color:#1b1b1b;font-weight:normal;transform:scaleX(0.9583);transform-origin:0 0;">Spells</div>
<div class="a t" style="left:1141.2px;top:19.84px;font-size:12px;line-height:1;font-family:'Liberation Sans', sans-serif;color:#1b1b1b;font-weight:normal;transform:scaleX(0.9583);transform-origin:0 0;">Help</div>
<div class="a" style="left:959px;top:37px;width:838px;height:26px;background:#f0f0f0;"></div>
<svg class="a" style="left:963px;top:42px;" width="3" height="19" viewBox="0 0 3 19"><rect x="1" y="0" width="1" height="1" fill="#b0b0b0"/><rect x="0" y="1" width="2" height="1" fill="#9a9a9a"/><rect x="1" y="2" width="1.5" height="1" fill="#e0e0e0"/><rect x="1" y="4" width="1" height="1" fill="#b0b0b0"/><rect x="0" y="5" width="2" height="1" fill="#9a9a9a"/><rect x="1" y="6" width="1.5" height="1" fill="#e0e0e0"/><rect x="1" y="8" width="1" height="1" fill="#b0b0b0"/><rect x="0" y="9" width="2" height="1" fill="#9a9a9a"/><rect x="1" y="10" width="1.5" height="1" fill="#e0e0e0"/><rect x="1" y="12" width="1" height="1" fill="#b0b0b0"/><rect x="0" y="13" width="2" height="1" fill="#9a9a9a"/><rect x="1" y="14" width="1.5" height="1" fill="#e0e0e0"/><rect x="1" y="16" width="1" height="1" fill="#b0b0b0"/><rect x="0" y="17" width="2" height="1" fill="#9a9a9a"/><rect x="1" y="18" width="1.5" height="1" fill="#e0e0e0"/></svg>
<div class="a" style="left:970px;top:42px;width:41px;height:16px;background:linear-gradient(#f0f0f0,#e5e5e5);border:1px solid #adadad;box-sizing:border-box;"></div>
<div class="a t" style="left:978.5px;top:44.81px;font-size:12px;line-height:1;font-family:'Liberation Mono', monospace;color:#000;font-weight:normal;letter-spacing:-1.2px;white-space:pre;-webkit-text-stroke:0.2px #000;">Load</div>
<div class="a" style="left:1018px;top:40px;width:133px;height:20px;background:#fff;border:1px solid #abadb3;box-sizing:border-box;overflow:hidden;"><div class="a t" style="left:-4px;top:4.11px;font-size:12px;line-height:1;font-family:'Liberation Mono', monospace;letter-spacing:-1.2px;white-space:pre;color:#000;-webkit-text-stroke:0.2px #000">aslut.esp\00000d62.nif</div></div>
<svg class="a" style="left:1153px;top:42px;" width="5" height="15" viewBox="0 0 5 15"><path d="M0.5 0 L3.8 2 L0.5 4Z" fill="#222"/><path d="M4 10.8 L0.8 12.8 L4 14.8Z" fill="#222"/></svg>
<div class="a" style="left:1159px;top:40px;width:133px;height:20px;background:#fff;border:1px solid #abadb3;box-sizing:border-box;overflow:hidden;"><div class="a t" style="left:-4px;top:4.11px;font-size:12px;line-height:1;font-family:'Liberation Mono', monospace;letter-spacing:-1.2px;white-space:pre;color:#000;-webkit-text-stroke:0.2px #000">aslut.esp\00000d62.nif</div></div>
<div class="a" style="left:1299px;top:42px;width:59px;height:16px;background:linear-gradient(#f0f0f0,#e5e5e5);border:1px solid #adadad;box-sizing:border-box;"></div>
<div class="a t" style="left:1307.5px;top:44.81px;font-size:12px;line-height:1;font-family:'Liberation Mono', monospace;color:#000;font-weight:normal;letter-spacing:-1.2px;white-space:pre;-webkit-text-stroke:0.2px #000;">Save&nbsp;As</div>
<div class="a" style="left:1360px;top:37px;width:1px;height:25px;background:#c5c5c5;"></div>
<svg class="a" style="left:1364.5px;top:41px;" width="3" height="20" viewBox="0 0 3 20"><rect x="1" y="0" width="1" height="1" fill="#b0b0b0"/><rect x="0" y="1" width="2" height="1" fill="#9a9a9a"/><rect x="1" y="2" width="1.5" height="1" fill="#e0e0e0"/><rect x="1" y="4" width="1" height="1" fill="#b0b0b0"/><rect x="0" y="5" width="2" height="1" fill="#9a9a9a"/><rect x="1" y="6" width="1.5" height="1" fill="#e0e0e0"/><rect x="1" y="8" width="1" height="1" fill="#b0b0b0"/><rect x="0" y="9" width="2" height="1" fill="#9a9a9a"/><rect x="1" y="10" width="1.5" height="1" fill="#e0e0e0"/><rect x="1" y="12" width="1" height="1" fill="#b0b0b0"/><rect x="0" y="13" width="2" height="1" fill="#9a9a9a"/><rect x="1" y="14" width="1.5" height="1" fill="#e0e0e0"/><rect x="1" y="16" width="1" height="1" fill="#b0b0b0"/><rect x="0" y="17" width="2" height="1" fill="#9a9a9a"/><rect x="1" y="18" width="1.5" height="1" fill="#e0e0e0"/></svg>
<svg class="a" style="left:1373.5px;top:45.3px;" width="16" height="9" viewBox="0 0 16 9"><path d="M0 3.3 C3 0.8 6 0 8.5 0.2 C12 0.5 14.5 3.5 15.8 7.6 C13 6.6 11 6.6 8 6.7 C5 6.7 2.5 5.4 0 3.3Z" fill="#1c2a88"/><path d="M2.8 3.7 C4.5 2.9 5.6 2.6 6.4 2.5 L6.3 5.4 C4.8 5.2 3.8 4.6 2.8 3.7Z" fill="#fff"/><path d="M9.8 2.6 C11.2 2.9 12.5 4 13.2 5.5 C12 5.3 11 5.3 9.9 5.4Z" fill="#fff"/><path d="M6.7 2.2 L9.5 2.2 L9.7 5.5 L6.5 5.5Z" fill="#6f8ef0"/></svg>
<div class="a" style="left:1394px;top:39px;width:23px;height:22px;background:#bddcf6;border:1px solid #74a8dc;box-sizing:border-box;"></div>
<svg class="a" style="left:1397.3px;top:45.3px;" width="16" height="9" viewBox="0 0 16 9"><g transform="translate(16,0) scale(-1,1)"><path d="M0 3.3 C3 0.8 6 0 8.5 0.2 C12 0.5 14.5 3.5 15.8 7.6 C13 6.6 11 6.6 8 6.7 C5 6.7 2.5 5.4 0 3.3Z" fill="#1a6a2a"/><path d="M2.8 3.7 C4.5 2.9 5.6 2.6 6.4 2.5 L6.3 5.4 C4.8 5.2 3.8 4.6 2.8 3.7Z" fill="#fff"/><path d="M9.8 2.6 C11.2 2.9 12.5 4 13.2 5.5 C12 5.3 11 5.3 9.9 5.4Z" fill="#fff"/><path d="M6.7 2.2 L9.5 2.2 L9.7 5.5 L6.5 5.5Z" fill="#6ee08a"/></g></svg>
<svg class="a" style="left:1420px;top:45.3px;" width="16" height="9" viewBox="0 0 16 9"><path d="M0 3.3 C3 0.8 6 0 8.5 0.2 C12 0.5 14.5 3.5 15.8 7.6 C13 6.6 11 6.6 8 6.7 C5 6.7 2.5 5.4 0 3.3Z" fill="#9a1818"/><path d="M2.8 3.7 C4.5 2.9 5.6 2.6 6.4 2.5 L6.3 5.4 C4.8 5.2 3.8 4.6 2.8 3.7Z" fill="#fff"/><path d="M9.8 2.6 C11.2 2.9 12.5 4 13.2 5.5 C12 5.3 11 5.3 9.9 5.4Z" fill="#fff"/><path d="M6.7 2.2 L9.5 2.2 L9.7 5.5 L6.5 5.5Z" fill="#f06060"/></svg>
<svg class="a" style="left:1442.6px;top:45.3px;" width="16" height="9" viewBox="0 0 16 9"><g transform="translate(16,0) scale(-1,1)"><path d="M0 3.3 C3 0.8 6 0 8.5 0.2 C12 0.5 14.5 3.5 15.8 7.6 C13 6.6 11 6.6 8 6.7 C5 6.7 2.5 5.4 0 3.3Z" fill="#505050"/><path d="M2.8 3.7 C4.5 2.9 5.6 2.6 6.4 2.5 L6.3 5.4 C4.8 5.2 3.8 4.6 2.8 3.7Z" fill="#fff"/><path d="M9.8 2.6 C11.2 2.9 12.5 4 13.2 5.5 C12 5.3 11 5.3 9.9 5.4Z" fill="#fff"/><path d="M6.7 2.2 L9.5 2.2 L9.7 5.5 L6.5 5.5Z" fill="#b8b8b8"/></g></svg>
<svg class="a" style="left:1468.5px;top:42px;" width="11" height="16" viewBox="0 0 11 16"><ellipse cx="3" cy="4.5" rx="2.2" ry="4.2" fill="#2a2a2a" transform="rotate(-14 3 4.5)"/><ellipse cx="3.3" cy="10.6" rx="1.6" ry="1.7" fill="#2a2a2a"/><ellipse cx="7.8" cy="8.2" rx="2.2" ry="4" fill="#2a2a2a" transform="rotate(-8 7.8 8.2)"/><ellipse cx="7.6" cy="14.2" rx="1.6" ry="1.7" fill="#2a2a2a"/></svg>
<div class="a" style="left:1488px;top:42px;width:1px;height:16px;background:#d0d0d0;"></div>
<svg class="a" style="left:1495px;top:44px;" width="16" height="12" viewBox="0 0 16 12"><defs><linearGradient id="mg" x1="0" y1="0" x2="0" y2="1"><stop offset="0" stop-color="#e8e8e8"/><stop offset="1" stop-color="#101010"/></linearGradient></defs><rect x="6.3" y="0.3" width="3.7" height="11.6" fill="url(#mg)" stroke="#1a1a1a" stroke-width="0.8"/><path d="M0 6 L3 3 L3 5 L5 5 L5 7 L3 7 L3 9Z" fill="#333"/><path d="M16 6 L13 3 L13 5 L11 5 L11 7 L13 7 L13 9Z" fill="#333"/></svg>
<svg class="a" style="left:1518px;top:46.6px;" width="16" height="11" viewBox="0 0 16 11"><defs><linearGradient id="tg" x1="0" y1="0" x2="0" y2="1"><stop offset="0" stop-color="#b0b0b0"/><stop offset="1" stop-color="#4a4a4a"/></linearGradient><linearGradient id="tg2" x1="0" y1="0" x2="0" y2="1"><stop offset="0" stop-color="#3a3a3a"/><stop offset="1" stop-color="#050505"/></linearGradient></defs><path d="M0 3.2 L8 0.3 L15.5 3.2 L8 10.6Z" fill="url(#tg2)"/><path d="M0.5 3.2 L8 0.6 L15 3.2 L8 5.2Z" fill="url(#tg)"/></svg>
<div class="a" style="left:1539.6px;top:37px;width:1px;height:25px;background:#c5c5c5;"></div>
<svg class="a" style="left:1544px;top:41px;" width="3" height="20" viewBox="0 0 3 20"><rect x="1" y="0" width="1" height="1" fill="#b0b0b0"/><rect x="0" y="1" width="2" height="1" fill="#9a9a9a"/><rect x="1" y="2" width="1.5" height="1" fill="#e0e0e0"/><rect x="1" y="4" width="1" height="1" fill="#b0b0b0"/><rect x="0" y="5" width="2" height="1" fill="#9a9a9a"/><rect x="1" y="6" width="1.5" height="1" fill="#e0e0e0"/><rect x="1" y="8" width="1" height="1" fill="#b0b0b0"/><rect x="0" y="9" width="2" height="1" fill="#9a9a9a"/><rect x="1" y="10" width="1.5" height="1" fill="#e0e0e0"/><rect x="1" y="12" width="1" height="1" fill="#b0b0b0"/><rect x="0" y="13" width="2" height="1" fill="#9a9a9a"/><rect x="1" y="14" width="1.5" height="1" fill="#e0e0e0"/><rect x="1" y="16" width="1" height="1" fill="#b0b0b0"/><rect x="0" y="17" width="2" height="1" fill="#9a9a9a"/><rect x="1" y="18" width="1.5" height="1" fill="#e0e0e0"/></svg>
<div class="a" style="left:1550px;top:39px;width:23px;height:22px;background:#bddcf6;border:1px solid #74a8dc;box-sizing:border-box;"></div>
<svg class="a" style="left:1555.6px;top:45.6px;" width="13" height="12" viewBox="0 0 13 12"><defs><linearGradient id="pg" x1="0" y1="0" x2="0" y2="1"><stop offset="0" stop-color="#777"/><stop offset="1" stop-color="#222"/></linearGradient></defs><path d="M0 0 L12.5 5.6 L0 11.3Z" fill="url(#pg)"/></svg>
<svg class="a" style="left:1630.5px;top:47px;" width="8" height="6" viewBox="0 0 8 6"><path d="M0.3 0.3 L3.2 2.6 L0.3 4.9 M4.1 0.3 L7 2.6 L4.1 4.9" stroke="#000" stroke-width="1.9" fill="none"/></svg>
<div class="a" style="left:1641px;top:37px;width:1px;height:25px;background:#c5c5c5;"></div>
<svg class="a" style="left:1645px;top:41px;" width="3" height="20" viewBox="0 0 3 20"><rect x="1" y="0" width="1" height="1" fill="#b0b0b0"/><rect x="0" y="1" width="2" height="1" fill="#9a9a9a"/><rect x="1" y="2" width="1.5" height="1" fill="#e0e0e0"/><rect x="1" y="4" width="1" height="1" fill="#b0b0b0"/><rect x="0" y="5" width="2" height="1" fill="#9a9a9a"/><rect x="1" y="6" width="1.5" height="1" fill="#e0e0e0"/><rect x="1" y="8" width="1" height="1" fill="#b0b0b0"/><rect x="0" y="9" width="2" height="1" fill="#9a9a9a"/><rect x="1" y="10" width="1.5" height="1" fill="#e0e0e0"/><rect x="1" y="12" width="1" height="1" fill="#b0b0b0"/><rect x="0" y="13" width="2" height="1" fill="#9a9a9a"/><rect x="1" y="14" width="1.5" height="1" fill="#e0e0e0"/><rect x="1" y="16" width="1" height="1" fill="#b0b0b0"/><rect x="0" y="17" width="2" height="1" fill="#9a9a9a"/><rect x="1" y="18" width="1.5" height="1" fill="#e0e0e0"/></svg>
<div class="a t" style="left:1660px;top:44.61px;font-size:12px;line-height:1;font-family:'Liberation Mono', monospace;color:#000;font-weight:normal;letter-spacing:-1.2px;white-space:pre;-webkit-text-stroke:0.2px #000;">Reset&nbsp;Block&nbsp;Details</div>
<svg class="a" style="left:1787px;top:46px;" width="8" height="6" viewBox="0 0 8 6"><path d="M0.3 0.3 L3.2 2.6 L0.3 4.9 M4.1 0.3 L7 2.6 L4.1 4.9" stroke="#000" stroke-width="1.9" fill="none"/></svg>
<div class="a" style="left:959px;top:63px;width:838px;height:565px;background:#000;"></div>
<svg class="a" style="left:959px;top:63px;" width="838" height="565" viewBox="0 0 838 565"><g transform="translate(-959,-63)"><path d="M1378.3 196 L1378.3 232 M1378.3 416 L1378.3 627" stroke="#1414d8" stroke-width="2.8"/><path d="M1372.3 206 L1378.3 189 L1384.8 206" stroke="#1010f0" stroke-width="2.8" fill="none" stroke-linejoin="round"/><path d="M1158 407.8 L1597 407.8" stroke="#c82828" stroke-width="2.6"/><path d="M1580.5 401.3 L1598.5 408 L1580.5 414.5" stroke="#ff1010" stroke-width="2.6" fill="none"/><path d="M1378.5 262 L1378.5 398" stroke="#fff" stroke-width="2.4"/><path d="M1373.7 230.6 L1380 229.6 L1387.2 230 L1391.7 235 L1391 243 L1388.3 248.5 L1387.2 257.5 L1390 259.8 L1392.8 262 L1390.6 264.3 L1388.3 263.1 L1385 260.9 L1381.6 259.8 L1378.8 263.1 L1376 266.5 L1370.3 271 L1367 268.8 L1364.7 258.7 L1367 247.4 L1368.1 236.2Z" fill="#fff"/><path d="M1378.3 393 C1384 393 1386.5 399 1386.5 405 C1387 411 1385 415 1384 418 L1372 418 C1370.5 414 1369.8 410 1370.2 404 C1370.2 398 1373 393 1378.3 393Z" fill="#fff"/><circle cx="1378.1" cy="407.5" r="3.4" fill="#f4f000"/><path d="M1371.5 412 L1373.5 414 L1371.5 415Z" fill="#70e070"/><path d="M1385 412 L1383 414 L1385 415Z" fill="#70e070"/></g></svg>
<div class="a" style="left:959px;top:628px;width:838px;height:5px;background:#f0f0f0;"></div>
<div class="a" style="left:959px;top:633px;width:838px;height:1px;background:#bdbdbd;"></div>
<div class="a" style="left:959px;top:634px;width:838px;height:17px;background:#dbdbdb;"></div>
<div class="a" style="left:959px;top:651px;width:838px;height:1px;background:#b9b9b9;"></div>
<div class="a" style="left:959px;top:652px;width:838px;height:2px;background:#f9f9f9;"></div>
<div class="a t" style="left:961px;top:637.81px;font-size:12px;line-height:1;font-family:'Liberation Mono', monospace;color:#000;font-weight:normal;letter-spacing:-1.2px;white-space:pre;-webkit-text-stroke:0.2px #000;">Block&nbsp;Details</div>
<svg class="a" style="left:1769px;top:638px;" width="9" height="9" viewBox="0 0 9 9"><path d="M3 0.5 H8.5 V6 H7 M3.5 2.5 V0.5" fill="none" stroke="#000" stroke-width="1.3"/><rect x="0.7" y="3.2" width="5.6" height="5.1" fill="#fff" stroke="#000" stroke-width="1.3"/><rect x="0.7" y="3.2" width="5.6" height="1.5" fill="#000"/><rect x="2.7" y="0.4" width="6" height="1.6" fill="#000"/></svg>
<svg class="a" style="left:1785px;top:639px;" width="8" height="8" viewBox="0 0 8 8"><path d="M0.5 0.5 L7.5 7.5 M7.5 0.5 L0.5 7.5" stroke="#000" stroke-width="1.6"/></svg>
<div class="a" style="left:959px;top:654px;width:845px;height:318px;background:#fff;border:1px solid #8a8a8a;box-sizing:border-box;"></div>
<div class="a" style="left:960px;top:655px;width:820px;height:22px;background:#fcfcfc;"></div>
<div class="a" style="left:960px;top:677px;width:820px;height:1px;background:#e8e8e8;"></div>
<div class="a" style="left:1172px;top:655px;width:1px;height:22px;background:#e5e5e5;"></div>
<div class="a" style="left:1422px;top:655px;width:1px;height:22px;background:#e5e5e5;"></div>
<div class="a" style="left:1686.5px;top:655px;width:1px;height:22px;background:#e5e5e5;"></div>
<div class="a t" style="left:964.2px;top:660.84px;font-size:12px;line-height:1;font-family:'Liberation Sans', sans-serif;color:#000;font-weight:normal;transform:scaleX(0.9903);transform-origin:0 0;">Name</div>
<div class="a t" style="left:1176.8px;top:660.84px;font-size:12px;line-height:1;font-family:'Liberation Sans', sans-serif;color:#000;font-weight:normal;transform:scaleX(0.9583);transform-origin:0 0;">Type</div>
<div class="a t" style="left:1426.5px;top:660.84px;font-size:12px;line-height:1;font-family:'Liberation Sans', sans-serif;color:#000;font-weight:normal;transform:scaleX(0.9583);transform-origin:0 0;">Value</div>
<div class="a t" style="left:1690.8px;top:660.84px;font-size:12px;line-height:1;font-family:'Liberation Sans', sans-serif;color:#000;font-weight:normal;transform:scaleX(0.9583);transform-origin:0 0;">Argument</div>
<div class="a" style="left:960px;top:678px;width:820px;height:277px;overflow:hidden">
<div class="a" style="left:0px;top:0px;width:820px;height:15px;background:#f0f3f9;"></div>
<div class="a t" style="left:23px;top:1.64px;font-size:12px;line-height:1;font-family:'Liberation Sans', sans-serif;color:#000;font-weight:normal;transform:scaleX(0.9898);transform-origin:0 0;">26 NiAlphaProperty</div>
<svg class="a" style="left:9px;top:3px;" width="6" height="10" viewBox="0 0 6 10"><path d="M0.5 0.5 L5 4.5 L0.5 8.5Z" fill="none" stroke="#8a8a8a" stroke-width="1"/></svg>
<div class="a t" style="left:216.5px;top:1.64px;font-size:12px;line-height:1;font-family:'Liberation Sans', sans-serif;color:#000;font-weight:normal;transform:scaleX(0.9583);transform-origin:0 0;">NiBlock</div>
<div class="a t" style="left:463.5px;top:3.68px;font-size:9px;line-height:1;font-family:'Liberation Sans', sans-serif;color:#000;font-weight:bold;letter-spacing:-0.2px;">Txt</div>
<div class="a" style="left:0px;top:15px;width:820px;height:15px;background:#fff;"></div>
<div class="a" style="left:20px;top:15px;width:800px;height:15px;background:#3c7fdc;"></div>
<div class="a t" style="left:23px;top:16.64px;font-size:12px;line-height:1;font-family:'Liberation Sans', sans-serif;color:#fff;font-weight:normal;transform:scaleX(0.9583);transform-origin:0 0;">27 NiTriShape</div>
<svg class="a" style="left:8px;top:19px;" width="7" height="7" viewBox="0 0 7 7"><path d="M6 0 L6 6 L0 6Z" fill="#262626"/></svg>
<div class="a t" style="left:216.5px;top:16.64px;font-size:12px;line-height:1;font-family:'Liberation Sans', sans-serif;color:#fff;font-weight:normal;transform:scaleX(0.9583);transform-origin:0 0;">NiBlock</div>
<div class="a t" style="left:463.5px;top:18.68px;font-size:9px;line-height:1;font-family:'Liberation Sans', sans-serif;color:#000;font-weight:bold;text-shadow:0 0 1px #fff;letter-spacing:-0.2px;">Txt</div>
<div class="a t" style="left:482px;top:16.64px;font-size:12px;line-height:1;font-family:'Liberation Sans', sans-serif;color:#fff;font-weight:normal;transform:scaleX(0.9806);transform-origin:0 0;">ApachiiHairF28 [6]</div>
<div class="a" style="left:0px;top:30px;width:820px;height:15px;background:#f0f3f9;"></div>
<div class="a t" style="left:43px;top:31.64px;font-size:12px;line-height:1;font-family:'Liberation Sans', sans-serif;color:#828282;font-weight:normal;transform:scaleX(0.9583);transform-origin:0 0;">Skyrim Shader Type</div>
<div class="a t" style="left:216.5px;top:31.64px;font-size:12px;line-height:1;font-family:'Liberation Sans', sans-serif;color:#828282;font-weight:normal;transform:scaleX(0.9583);transform-origin:0 0;">BSLightingShaderPropertyShaderType</div>
<div class="a t" style="left:466.5px;top:31.64px;font-size:12px;line-height:1;font-family:'Liberation Sans', sans-serif;color:#828282;font-weight:normal;transform:scaleX(0.9583);transform-origin:0 0;">Default</div>
<div class="a" style="left:0px;top:45px;width:820px;height:15px;background:#fff;"></div>
<div class="a t" style="left:43px;top:46.64px;font-size:12px;line-height:1;font-family:'Liberation Sans', sans-serif;color:#000;font-weight:normal;transform:scaleX(0.9903);transform-origin:0 0;">Name</div>
<div class="a t" style="left:216.5px;top:46.64px;font-size:12px;line-height:1;font-family:'Liberation Sans', sans-serif;color:#000;font-weight:normal;transform:scaleX(0.9583);transform-origin:0 0;">string</div>
<div class="a t" style="left:463.5px;top:48.68px;font-size:9px;line-height:1;font-family:'Liberation Sans', sans-serif;color:#000;font-weight:bold;letter-spacing:-0.2px;">Txt</div>
<div class="a t" style="left:482px;top:46.64px;font-size:12px;line-height:1;font-family:'Liberation Sans', sans-serif;color:#000;font-weight:normal;transform:scaleX(0.9806);transform-origin:0 0;">ApachiiHairF28 [6]</div>
<div class="a" style="left:0px;top:60px;width:820px;height:15px;background:#f0f3f9;"></div>
<div class="a t" style="left:43px;top:61.64px;font-size:12px;line-height:1;font-family:'Liberation Sans', sans-serif;color:#828282;font-weight:normal;transform:scaleX(0.9306);transform-origin:0 0;">Has Old Extra Data</div>
<div class="a t" style="left:216.5px;top:61.64px;font-size:12px;line-height:1;font-family:'Liberation Sans', sans-serif;color:#828282;font-weight:normal;transform:scaleX(0.9583);transform-origin:0 0;">bool</div>
<div class="a t" style="left:466.5px;top:61.64px;font-size:12px;line-height:1;font-family:'Liberation Sans', sans-serif;color:#828282;font-weight:normal;transform:scaleX(0.9583);transform-origin:0 0;">no</div>
<div class="a" style="left:0px;top:75px;width:820px;height:15px;background:#fff;"></div>
<div class="a t" style="left:43px;top:76.64px;font-size:12px;line-height:1;font-family:'Liberation Sans', sans-serif;color:#828282;font-weight:normal;transform:scaleX(0.9583);transform-origin:0 0;">Old Extra Prop Name</div>
<div class="a t" style="left:216.5px;top:76.64px;font-size:12px;line-height:1;font-family:'Liberation Sans', sans-serif;color:#828282;font-weight:normal;transform:scaleX(0.9583);transform-origin:0 0;">string</div>
<div class="a t" style="left:463.5px;top:78.68px;font-size:9px;line-height:1;font-family:'Liberation Sans', sans-serif;color:#000;font-weight:bold;letter-spacing:-0.2px;">Txt</div>
<div class="a" style="left:0px;top:90px;width:820px;height:15px;background:#f0f3f9;"></div>
<div class="a t" style="left:43px;top:91.64px;font-size:12px;line-height:1;font-family:'Liberation Sans', sans-serif;color:#828282;font-weight:normal;transform:scaleX(0.9583);transform-origin:0 0;">Old Extra Internal Id</div>
<div class="a t" style="left:216.5px;top:91.64px;font-size:12px;line-height:1;font-family:'Liberation Sans', sans-serif;color:#828282;font-weight:normal;transform:scaleX(0.9583);transform-origin:0 0;">uint</div>
<div class="a t" style="left:466.5px;top:91.64px;font-size:12px;line-height:1;font-family:'Liberation Sans', sans-serif;color:#828282;font-weight:normal;transform:scaleX(0.9583);transform-origin:0 0;">0</div>
<div class="a" style="left:0px;top:105px;width:820px;height:15px;background:#fff;"></div>
<div class="a t" style="left:43px;top:106.64px;font-size:12px;line-height:1;font-family:'Liberation Sans', sans-serif;color:#828282;font-weight:normal;transform:scaleX(0.9583);transform-origin:0 0;">Old Extra String</div>
<div class="a t" style="left:216.5px;top:106.64px;font-size:12px;line-height:1;font-family:'Liberation Sans', sans-serif;color:#828282;font-weight:normal;transform:scaleX(0.9583);transform-origin:0 0;">string</div>
<div class="a t" style="left:463.5px;top:108.68px;font-size:9px;line-height:1;font-family:'Liberation Sans', sans-serif;color:#000;font-weight:bold;letter-spacing:-0.2px;">Txt</div>
<div class="a" style="left:0px;top:120px;width:820px;height:15px;background:#f0f3f9;"></div>
<div class="a t" style="left:43px;top:121.64px;font-size:12px;line-height:1;font-family:'Liberation Sans', sans-serif;color:#828282;font-weight:normal;transform:scaleX(0.9913);transform-origin:0 0;">Unknown Byte</div>
<div class="a t" style="left:216.5px;top:121.64px;font-size:12px;line-height:1;font-family:'Liberation Sans', sans-serif;color:#828282;font-weight:normal;transform:scaleX(0.9583);transform-origin:0 0;">byte</div>
<div class="a t" style="left:466.5px;top:121.64px;font-size:12px;line-height:1;font-family:'Liberation Sans', sans-serif;color:#828282;font-weight:normal;transform:scaleX(0.9583);transform-origin:0 0;">0</div>
<div class="a" style="left:0px;top:135px;width:820px;height:15px;background:#fff;"></div>
<div class="a t" style="left:43px;top:136.64px;font-size:12px;line-height:1;font-family:'Liberation Sans', sans-serif;color:#828282;font-weight:normal;transform:scaleX(0.8996);transform-origin:0 0;">Extra Data</div>
<div class="a t" style="left:216.5px;top:136.64px;font-size:12px;line-height:1;font-family:'Liberation Sans', sans-serif;color:#828282;font-weight:normal;transform:scaleX(0.9499);transform-origin:0 0;">Ref&lt;NiExtraData&gt;</div>
<div class="a t" style="left:466.5px;top:136.64px;font-size:12px;line-height:1;font-family:'Liberation Sans', sans-serif;color:#828282;font-weight:normal;transform:scaleX(0.9583);transform-origin:0 0;">None</div>
<div class="a" style="left:0px;top:150px;width:820px;height:15px;background:#f0f3f9;"></div>
<div class="a t" style="left:43px;top:151.64px;font-size:12px;line-height:1;font-family:'Liberation Sans', sans-serif;color:#000;font-weight:normal;transform:scaleX(0.9583);transform-origin:0 0;">Num Extra Data List</div>
<div class="a t" style="left:216.5px;top:151.64px;font-size:12px;line-height:1;font-family:'Liberation Sans', sans-serif;color:#000;font-weight:normal;transform:scaleX(0.9583);transform-origin:0 0;">uint</div>
<div class="a t" style="left:466.5px;top:151.64px;font-size:12px;line-height:1;font-family:'Liberation Sans', sans-serif;color:#000;font-weight:normal;transform:scaleX(0.9583);transform-origin:0 0;">0</div>
<div class="a" style="left:0px;top:165px;width:820px;height:15px;background:#fff;"></div>
<div class="a t" style="left:43px;top:166.64px;font-size:12px;line-height:1;font-family:'Liberation Sans', sans-serif;color:#000;font-weight:normal;transform:scaleX(0.9583);transform-origin:0 0;">Extra Data List</div>
<div class="a t" style="left:216.5px;top:166.64px;font-size:12px;line-height:1;font-family:'Liberation Sans', sans-serif;color:#000;font-weight:normal;transform:scaleX(0.9499);transform-origin:0 0;">Ref&lt;NiExtraData&gt;</div>
<svg class="a" style="left:464.5px;top:166px;" width="14" height="14" viewBox="0 0 14 14"><path d="M7.5 2.2 C4 2 1.8 4.5 2 8.2" stroke="#2c8a22" stroke-width="4.2" fill="none"/><path d="M7.5 2.2 C4 2 1.8 4.5 2 8.2" stroke="#74d052" stroke-width="2.4" fill="none"/><path d="M6.5 -1 L10.5 2.4 L6.5 5.6Z" fill="#5cbf3e" stroke="#2c8a22" stroke-width="0.8"/><path d="M6.5 11.8 C10 12 12.2 9.5 12 5.8" stroke="#2c8a22" stroke-width="4.2" fill="none"/><path d="M6.5 11.8 C10 12 12.2 9.5 12 5.8" stroke="#5cc040" stroke-width="2.4" fill="none"/><path d="M7.5 15 L3.5 11.6 L7.5 8.4Z" fill="#4fb534" stroke="#2c8a22" stroke-width="0.8"/></svg>
<div class="a" style="left:0px;top:180px;width:820px;height:15px;background:#f0f3f9;"></div>
<div class="a t" style="left:43px;top:181.64px;font-size:12px;line-height:1;font-family:'Liberation Sans', sans-serif;color:#000;font-weight:normal;transform:scaleX(0.9583);transform-origin:0 0;">Controller</div>
<div class="a t" style="left:216.5px;top:181.64px;font-size:12px;line-height:1;font-family:'Liberation Sans', sans-serif;color:#000;font-weight:normal;transform:scaleX(1.0052);transform-origin:0 0;">Ref&lt;NiTimeController&gt;</div>
<div class="a t" style="left:466.5px;top:181.64px;font-size:12px;line-height:1;font-family:'Liberation Sans', sans-serif;color:#000;font-weight:normal;transform:scaleX(0.9583);transform-origin:0 0;">None</div>
<div class="a" style="left:0px;top:195px;width:820px;height:15px;background:#fff;"></div>
<div class="a t" style="left:43px;top:196.64px;font-size:12px;line-height:1;font-family:'Liberation Sans', sans-serif;color:#000;font-weight:normal;transform:scaleX(0.9583);transform-origin:0 0;">Flags</div>
<div class="a t" style="left:216.5px;top:196.64px;font-size:12px;line-height:1;font-family:'Liberation Sans', sans-serif;color:#000;font-weight:normal;transform:scaleX(0.9583);transform-origin:0 0;">Flags</div>
<svg class="a" style="left:463.8px;top:195.5px;" width="14" height="15" viewBox="0 0 14 15"><path d="M3.8 2.2 L9.5 2.4 L13.4 5.6 L11.6 12.6 Q9.5 10.2 7.2 9.6 L3.1 10.2Z" fill="#fafafa" stroke="#7a7a7a" stroke-width="1"/><circle cx="7.6" cy="6" r="1.7" fill="#c65a4a"/><circle cx="6.4" cy="7.4" r="1.1" fill="#e2c048"/><circle cx="7.9" cy="4.6" r="1.1" fill="#6a58b0"/><path d="M3.6 1.2 L1.4 14.6" stroke="#111" stroke-width="1.4" stroke-linecap="round"/></svg>
<div class="a t" style="left:482px;top:196.64px;font-size:12px;line-height:1;font-family:'Liberation Sans', sans-serif;color:#000;font-weight:normal;transform:scaleX(0.9583);transform-origin:0 0;">14</div>
<div class="a" style="left:0px;top:210px;width:820px;height:15px;background:#f0f3f9;"></div>
<div class="a t" style="left:43px;top:211.64px;font-size:12px;line-height:1;font-family:'Liberation Sans', sans-serif;color:#000;font-weight:normal;transform:scaleX(0.9583);transform-origin:0 0;">Unknown Short 1</div>
<div class="a t" style="left:216.5px;top:211.64px;font-size:12px;line-height:1;font-family:'Liberation Sans', sans-serif;color:#000;font-weight:normal;transform:scaleX(0.9583);transform-origin:0 0;">ushort</div>
<div class="a t" style="left:466.5px;top:211.64px;font-size:12px;line-height:1;font-family:'Liberation Sans', sans-serif;color:#000;font-weight:normal;transform:scaleX(0.9583);transform-origin:0 0;">8</div>
<div class="a" style="left:0px;top:225px;width:820px;height:15px;background:#fff;"></div>
<div class="a t" style="left:43px;top:226.64px;font-size:12px;line-height:1;font-family:'Liberation Sans', sans-serif;color:#000;font-weight:normal;transform:scaleX(0.9583);transform-origin:0 0;">Translation</div>
<div class="a t" style="left:216.5px;top:226.64px;font-size:12px;line-height:1;font-family:'Liberation Sans', sans-serif;color:#000;font-weight:normal;transform:scaleX(0.9583);transform-origin:0 0;">Vector3</div>
<div class="a t" style="left:466.5px;top:226.64px;font-size:12px;line-height:1;font-family:'Liberation Sans', sans-serif;color:#000;font-weight:normal;transform:scaleX(0.9032);transform-origin:0 0;">X 0.0000 Y 0.0000 Z 0.0000</div>
<div class="a" style="left:0px;top:240px;width:820px;height:15px;background:#f0f3f9;"></div>
<div class="a t" style="left:43px;top:241.64px;font-size:12px;line-height:1;font-family:'Liberation Sans', sans-serif;color:#000;font-weight:normal;transform:scaleX(0.9583);transform-origin:0 0;">Rotation</div>
<div class="a t" style="left:216.5px;top:241.64px;font-size:12px;line-height:1;font-family:'Liberation Sans', sans-serif;color:#000;font-weight:normal;transform:scaleX(0.9583);transform-origin:0 0;">Matrix33</div>
<div class="a t" style="left:466.5px;top:241.64px;font-size:12px;line-height:1;font-family:'Liberation Sans', sans-serif;color:#000;font-weight:normal;transform:scaleX(0.9162);transform-origin:0 0;">Y -0.00 P 0.00 R -0.00</div>
<div class="a" style="left:0px;top:255px;width:820px;height:15px;background:#fff;"></div>
<div class="a t" style="left:43px;top:256.64px;font-size:12px;line-height:1;font-family:'Liberation Sans', sans-serif;color:#000;font-weight:normal;transform:scaleX(0.9583);transform-origin:0 0;">Scale</div>
<div class="a t" style="left:216.5px;top:256.64px;font-size:12px;line-height:1;font-family:'Liberation Sans', sans-serif;color:#000;font-weight:normal;transform:scaleX(0.9583);transform-origin:0 0;">float</div>
<div class="a t" style="left:466.5px;top:256.64px;font-size:12px;line-height:1;font-family:'Liberation Sans', sans-serif;color:#000;font-weight:normal;transform:scaleX(0.8991);transform-origin:0 0;">1.0000</div>
<div class="a" style="left:0px;top:270px;width:820px;height:15px;background:#f0f3f9;"></div>
<div class="a t" style="left:43px;top:271.64px;font-size:12px;line-height:1;font-family:'Liberation Sans', sans-serif;color:#828282;font-weight:normal;transform:scaleX(0.9583);transform-origin:0 0;">Velocity</div>
<div class="a t" style="left:216.5px;top:271.64px;font-size:12px;line-height:1;font-family:'Liberation Sans', sans-serif;color:#828282;font-weight:normal;transform:scaleX(0.9583);transform-origin:0 0;">Vector3</div>
<div class="a t" style="left:466.5px;top:271.64px;font-size:12px;line-height:1;font-family:'Liberation Sans', sans-serif;color:#828282;font-weight:normal;transform:scaleX(0.9032);transform-origin:0 0;">X 0.0000 Y 0.0000 Z 0.0000</div>
</div>
<div class="a" style="left:1172px;top:693px;width:251px;height:15px;outline:1px dotted #20406a;outline-offset:-1px;"></div>
<div class="a" style="left:1780px;top:655px;width:17px;height:300px;background:#f0f0f0;"></div>
<svg class="a" style="left:1785px;top:661px;" width="8" height="5" viewBox="0 0 8 5"><path d="M0.5 4.5 L4 1 L7.5 4.5" stroke="#505050" stroke-width="2" fill="none"/></svg>
<svg class="a" style="left:1785px;top:944px;" width="8" height="5" viewBox="0 0 8 5"><path d="M0.5 0.5 L4 4 L7.5 0.5" stroke="#505050" stroke-width="2" fill="none"/></svg>
<div class="a" style="left:1781px;top:745px;width:15px;height:47px;background:#cdcdcd;"></div>
<div class="a" style="left:1784px;top:765px;width:9px;height:8px;background:#e8e8e8;"></div>
<div class="a" style="left:960px;top:955px;width:820px;height:16px;background:#f0f0f0;"></div>
<div class="a" style="left:977px;top:956px;width:451px;height:14px;background:#cdcdcd;"></div>
<div class="a" style="left:1197px;top:959px;width:9px;height:9px;background:#e8e8e8;"></div>
<svg class="a" style="left:966px;top:959px;" width="5" height="9" viewBox="0 0 5 9"><path d="M4 0.5 L0.8 4.5 L4 8.5" stroke="#505050" stroke-width="2" fill="none"/></svg>
<svg class="a" style="left:1770px;top:959px;" width="5" height="9" viewBox="0 0 5 9"><path d="M0.5 0.5 L3.7 4.5 L0.5 8.5" stroke="#505050" stroke-width="2" fill="none"/></svg>
<div class="a" style="left:1780px;top:955px;width:17px;height:16px;background:#fff;"></div>
</body></html>
